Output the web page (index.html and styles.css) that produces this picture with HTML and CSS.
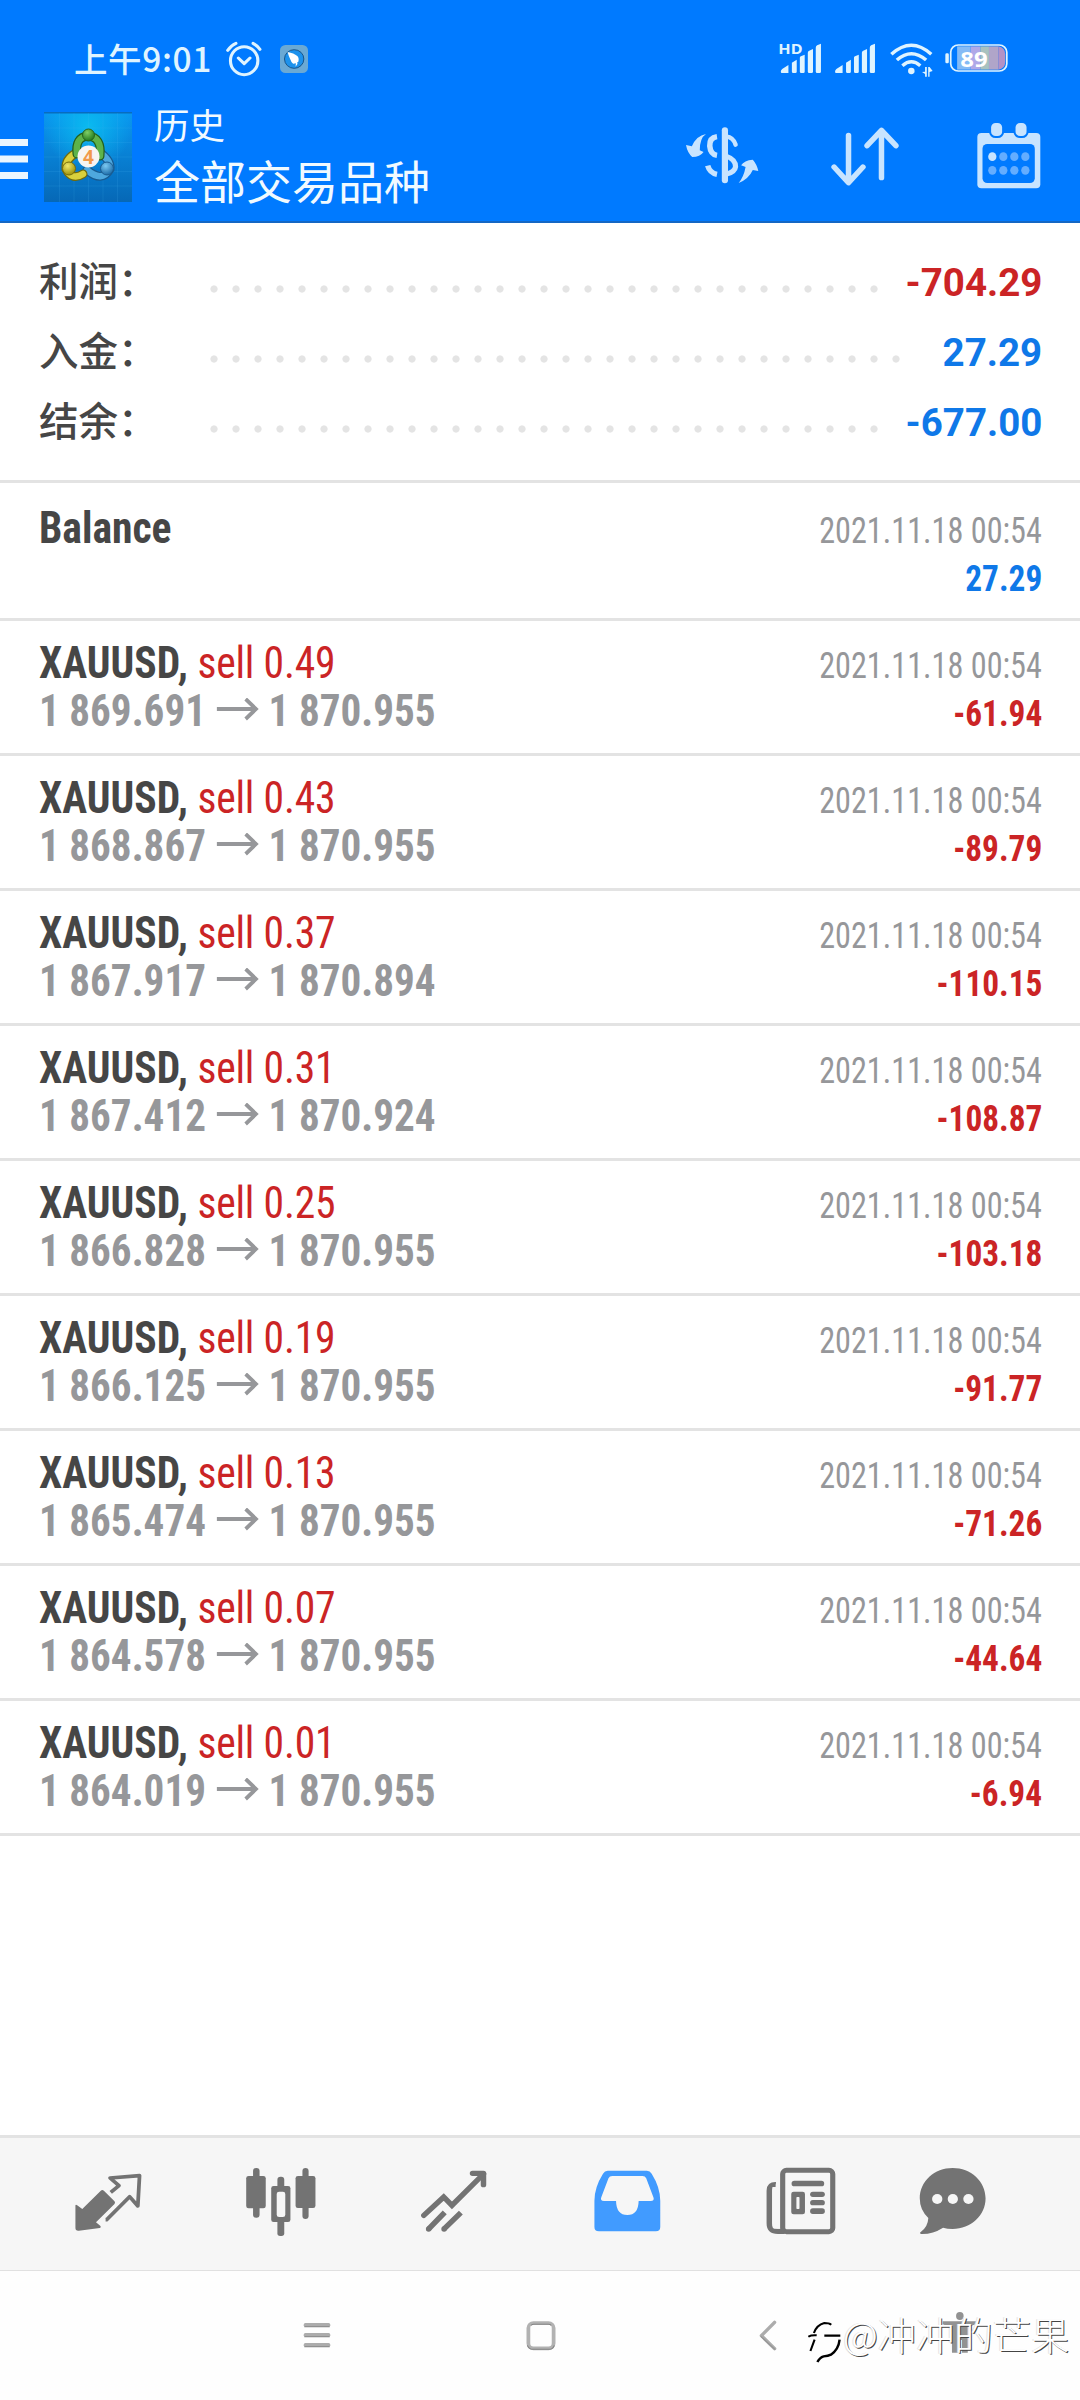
FILE: index.html
```html
<!DOCTYPE html>
<html lang="zh-CN">
<head>
<meta charset="utf-8">
<title>历史</title>
<link rel="stylesheet" href="styles.css">
</head>
<body>
<header class="header">
  <div class="status">
    <span class="time">上午9:01</span>
    <svg class="alarm" width="36" height="40" viewBox="655 120 105 120" preserveAspectRatio="none" fill="none" stroke="#dff4ff" stroke-width="9" stroke-linecap="round" stroke-linejoin="round"><ellipse cx="708" cy="182" rx="40" ry="42"/><path d="M691 174l17 17 17-17M660 151q10-15 24-21M754 148q-9-12-20-18"/></svg>
    <svg class="ding" width="28" height="40" viewBox="813 120 81 120" preserveAspectRatio="none"><rect x="813" y="135" width="81" height="84" rx="16" fill="#6aa9d4"/><circle cx="854" cy="177" r="28" fill="#1d92ec" stroke="#12497c" stroke-width="2.5"/><path d="M835 156q18 3 28 12 6 6 3 17l-4 3 2 3-6 9 1-10-8 1q-6-4-7-10 -6-12-9-25z" fill="#fff"/></svg>
    <div class="signals">
      <svg width="45" height="40" viewBox="689 120 130 120" preserveAspectRatio="none" fill="#dff4ff"><path id="bars" d="M700 215q0-5 4-8l18-12v24h-19q-3 0-3-4zM732 188l14-9v36q0 4-4 4h-6q-4 0-4-4zM755 173q0-3 3-4l11-5v51q0 4-4 4h-6q-4 0-4-4zM778 158q0-4 4-6l11-5v68q0 4-4 4h-7q-4 0-4-4zM801 143q0-5 4-7l11-5v84q0 4-4 4h-7q-4 0-4-4z"/><text x="693" y="162" class="hd" textLength="70" lengthAdjust="spacingAndGlyphs">HD</text></svg>
      <svg width="42" height="40" viewBox="697 120 122 120" preserveAspectRatio="none" fill="#dff4ff"><use href="#bars"/></svg>
      <svg class="wifi" width="43" height="40" viewBox="1018 120 125 120" preserveAspectRatio="none" fill="none" stroke="#dff4ff" stroke-width="10"><path d="M1022 163q58-54 116 0M1038 180q42-38 85 0M1054 197q26-23 52 0"/><circle cx="1080" cy="213" r="9.5" fill="#dff4ff" stroke="none"/><path stroke="none" fill="#dff4ff" d="M1120 201h5v29h-5v-8l-9-6 9-1zM1129 201h4l9 12-9 3v14h-4z"/></svg>
      <svg class="battery" width="63" height="40" viewBox="1177 120 182 120" preserveAspectRatio="none"><rect x="1178" y="160" width="10" height="30" rx="4" fill="#dff4ff"/><rect x="1193.500" y="135" width="162" height="78" rx="22" fill="none" stroke="#dff4ff" stroke-width="5"/><path fill="#85bbf5" d="M1212 139h39v70h-39z"/><path fill="#b0a8e8" d="M1251 139h28v70h-28z"/><path fill="#a9c2bf" d="M1279 139h25v70h-25z"/><path fill="#b0a5c9" d="M1304 139h27v70h-27z"/><path fill="#b392c6" d="M1331 139q20 4 20 24v22q0 20-20 24z"/><text x="1221" y="200" class="level" textLength="79" lengthAdjust="spacingAndGlyphs">89</text></svg>
    </div>
  </div>
  <div class="toolbar">
    <svg width="28" height="96" viewBox="0 110 28 96" fill="#ebf6ff"><path d="M0 139h28v7H0zM0 155.500h28v7H0zM0 172h28v7H0z"/></svg>
    <svg class="logo" width="88" height="96" viewBox="44 110 88 96">
      <defs>
        <linearGradient id="bg" x1="0" y1="0" x2="0" y2="1"><stop offset="0" stop-color="#0a97f0"/><stop offset="1" stop-color="#0668b6"/></linearGradient>
        <radialGradient id="glow" cx=".5" cy=".15" r=".5"><stop offset="0" stop-color="#0abaf0"/><stop offset="1" stop-color="#0abaf0" stop-opacity="0"/></radialGradient>
        <radialGradient id="g1" cx=".4" cy=".3" r=".7"><stop offset="0" stop-color="#7fce66"/><stop offset="1" stop-color="#237a1d"/></radialGradient>
        <radialGradient id="g2" cx=".4" cy=".3" r=".7"><stop offset="0" stop-color="#f0e96c"/><stop offset="1" stop-color="#9d9108"/></radialGradient>
        <radialGradient id="g3" cx=".4" cy=".3" r=".7"><stop offset="0" stop-color="#7cc9f2"/><stop offset="1" stop-color="#1c6ca9"/></radialGradient>
      </defs>
      <path fill="url(#bg)" d="M44 113h88v89H44z"/><path fill="url(#glow)" d="M44 113h88v89H44z"/><path fill="#096dbd" d="M44 112h88v1.500H44z"/>
      <path d="M59.500 113v89M74 113v89M88.500 113v89M103 113v89M117.500 113v89M44 128h88M44 142.500h88M44 157h88M44 171.500h88M44 186h88" stroke="#4db8f5" stroke-opacity=".14" fill="none"/>
      <g fill="none" stroke-linecap="round">
        <path d="M99 152q12 8 11 17-8 14-23 1" stroke="#185b91" stroke-width="9"/><path d="M99 152q12 8 11 17-8 14-23 1" stroke="#4ea8de" stroke-width="6.500"/>
        <path d="M76 153q-11 6-10 16 6 12 17 5" stroke="#716b0b" stroke-width="9"/><path d="M76 153q-11 6-10 16 6 12 17 5" stroke="#d9d03c" stroke-width="6.500"/>
        <path d="M77 154q-2-17 11-18 14 1 12 20" stroke="#235f1c" stroke-width="9"/><path d="M77 154q-2-17 11-18 14 1 12 20" stroke="#5db34a" stroke-width="6.500"/>
      </g>
      <circle cx="88.500" cy="135" r="6" fill="url(#g1)" stroke="#27651e"/><circle cx="69" cy="168.500" r="6.500" fill="url(#g2)" stroke="#756b0b"/><circle cx="107" cy="168.500" r="6.500" fill="url(#g3)" stroke="#1a5b90"/>
      <circle cx="88.500" cy="156.500" r="11" fill="#f7f5f2"/><text x="88.500" y="163.500" class="four" text-anchor="middle">4</text>
    </svg>
    <div class="titles"><div class="title">历史</div><div class="subtitle">全部交易品种</div></div>
    <div class="actions">
      <svg width="73" height="96" viewBox="424 330 212 288" preserveAspectRatio="none" fill="#c8e4ff"><path d="M482 402q-18 12-18 49l11 5q-10 15-33 15-14-13-18-36l17 4q13-32 41-37zM577 549q15-19 20-48l-13-5q9-15 34-17 12 14 16 34l-16-3q-12 27-41 39z"/><g fill="none" stroke="#c8e4ff"><path d="M514 410q-22 3-21 28 2 25 21 28" stroke-width="16"/><path d="M487 497q6 22 27 26" stroke-width="16" /><path d="M540 409q22 3 28 25" stroke-width="13" stroke-linecap="round"/><path d="M540 468q28 10 28 32-2 17-28 23" stroke-width="15"/><path d="M537 391v150" stroke-width="18" stroke-linecap="round"/></g></svg>
      <svg class="sort" width="68" height="96" viewBox="845 330 198 288" preserveAspectRatio="none" fill="none" stroke="#c8e4ff" stroke-width="16" stroke-linecap="round" stroke-linejoin="round"><path d="M896 406v140M854 501l42 47 42-47M992 533V393M950 437l42-46 42 46"/></svg>
      <svg width="64" height="96" viewBox="1268 330 186 288" preserveAspectRatio="none"><rect x="1269" y="399" width="183" height="166" rx="12" fill="#c8e4ff"/><rect x="1284" y="432" width="152" height="117" rx="14" fill="#007aff"/><g fill="#c8e4ff" stroke="#007aff" stroke-width="6"><rect x="1306" y="366" width="38" height="45" rx="16"/><rect x="1377" y="366" width="38" height="45" rx="16"/></g><g fill="#64adff"><ellipse cx="1312.500" cy="470" rx="12" ry="13" fill="#c8e4ff"/><ellipse cx="1344.500" cy="470" rx="12" ry="13"/><ellipse cx="1376.500" cy="470" rx="12" ry="13"/><ellipse cx="1408.500" cy="470" rx="12" ry="13"/><ellipse cx="1312.500" cy="511" rx="12" ry="13"/><ellipse cx="1344.500" cy="511" rx="12" ry="13"/><ellipse cx="1376.500" cy="511" rx="12" ry="13"/><ellipse cx="1408.500" cy="511" rx="12" ry="13"/></g></svg>
    </div>
  </div>
</header>

<section class="summary">
  <div class="sum"><span class="label">利润：</span><span class="dots"></span><span class="total red">-704.29</span></div>
  <div class="sum"><span class="label">入金：</span><span class="dots long"></span><span class="total blue">27.29</span></div>
  <div class="sum"><span class="label">结余：</span><span class="dots"></span><span class="total blue">-677.00</span></div>
</section>

<main class="deals" id="deals">
  <article class="deal balance">
    <div class="line"><span class="name">Balance</span><span class="date">2021.11.18 00:54</span></div>
    <div class="line"><span class="prices">&nbsp;</span><span class="amount blue">27.29</span></div>
  </article>
</main>

<nav class="tabs">
  <svg viewBox="209 135 210 216" preserveAspectRatio="none"><path d="M219 256q1-3 5 0l15 11 54-55q4-4 9 0l31 32q3 4 0 8l-54 55 13 11q3 4-2 6l-61 8q-10 1-10-8z" fill="#737373"/><path d="M322 217l24-20-26-23 86-7-5 91-24-28-67 69h-3" fill="none" stroke="#737373" stroke-width="11" stroke-linejoin="round"/></svg>
  <svg viewBox="711.500 135 210 216" preserveAspectRatio="none" fill="#737373"><rect x="735" y="144" width="19" height="149" rx="9"/><rect x="715" y="168" width="57" height="97" rx="7"/><rect x="879" y="144" width="18" height="153" rx="9"/><rect x="859" y="168" width="58" height="96" rx="7"/><rect x="806" y="170" width="20" height="40" rx="9"/><rect x="806" y="290" width="20" height="58" rx="8"/><rect x="788" y="198" width="56" height="108" rx="7"/><rect x="804" y="215" width="25" height="76" rx="7" fill="#f6f6f6"/></svg>
  <svg viewBox="1214 135 210 216" preserveAspectRatio="none" fill="none" stroke="#737373" stroke-width="16"><path d="M1231 286l58-55 24 25 92-94" stroke-linecap="round"/><path d="M1373 160h32v34" stroke-width="16" stroke-linecap="round" stroke-linejoin="round"/><path d="M1292 277l-46 49M1339 278l-48 48"/><path d="M1245 327h.1M1290 327h.1" stroke-linecap="round"/></svg>
  <svg viewBox="148 135 210 216" preserveAspectRatio="none"><path fill="#419bff" fill-rule="evenodd" d="M197 152h114q9 0 14 9 25 41 25 81v79q0 13-13 13H171q-13 0-13-13v-79q0-40 25-81 5-9 14-9zM210 168q-8 0-11 7l-21 57q-4 11 8 11h35q1 42 33 42t33-42h35q12 0 8-11l-21-57q-3-7-11-7z"/></svg>
  <svg viewBox="650.500 135 210 216" preserveAspectRatio="none"><rect x="705" y="151" width="146" height="184" rx="11" fill="none" stroke="#737373" stroke-width="15"/><path d="M685 194q-19-1-19 18v98q0 24 25 24h20" fill="none" stroke="#737373" stroke-width="16"/><path d="M675 201h10v-9h12v134h-17q-5 0-5-10z" fill="#f6f6f6"/><g fill="#737373"><rect x="731" y="182" width="95" height="17" rx="8"/><rect x="730" y="215" width="40" height="68" rx="7"/><rect x="785" y="215" width="43" height="16" rx="8"/><rect x="785" y="240" width="43" height="16" rx="8"/><rect x="785" y="265" width="43" height="17" rx="8"/></g><rect x="745" y="231" width="9" height="36" rx="2" fill="#f6f6f6"/></svg>
  <svg class="chat" viewBox="1095 135 210 216" preserveAspectRatio="none"><path fill="#737373" d="M1199 144c53 0 96 40 96 91s-43 92-96 92q-16 0-28-4-30 20-64 19-6-2-1-6 21-16 22-42-25-24-25-59c0-51 43-91 96-91z"/><g fill="#f6f6f6"><circle cx="1154" cy="237" r="15"/><circle cx="1199.500" cy="237" r="15"/><circle cx="1245" cy="237" r="15"/></g></svg>
</nav>

<footer class="system">
  <svg class="recents" width="28" height="34" viewBox="881 597 82 102" preserveAspectRatio="none"><g fill="#acacac"><rect x="883" y="609" width="78" height="12" rx="5"/><rect x="883" y="639" width="78" height="12" rx="5"/><rect x="883" y="669" width="78" height="12" rx="5"/></g><path d="M886 620.500h72M886 650.500h72M886 680.500h72" stroke="#868686" stroke-width="3" stroke-linecap="round"/></svg>
  <svg class="home" width="30" height="34" viewBox="1527 597 88 102" preserveAspectRatio="none" fill="none"><rect x="1534" y="609" width="74" height="76" rx="15" stroke="#b2b2b2" stroke-width="11"/><path d="M1531 676q5 12 16 12h48q11 0 15-12M1542 616q3-3 8-3h43q5 0 8 3" stroke="#858585" stroke-width="3"/></svg>
  <svg class="back" width="18" height="34" viewBox="635 597 52 102" preserveAspectRatio="none" fill="none" stroke-linecap="round" stroke-linejoin="round"><path d="M680 607l-38 40 38 39" stroke="#acacac" stroke-width="10"/><path d="M641 650l40 38" stroke="#939393" stroke-width="3"/></svg>
  <div class="mark">
    <svg class="person" width="34" height="44" viewBox="1168 572 99 132" preserveAspectRatio="none" fill="#929292"><ellipse cx="1220" cy="587" rx="11" ry="12"/><path d="M1170 603h97v9l-24 8v77h-17v-38h-10v38h-19v-75l-27-10z"/></svg>
    <svg class="swirl" width="33" height="48" viewBox="780 600 95 144" preserveAspectRatio="none" fill="none" stroke="#000"><path d="M797 642q8-24 30-30 14 0 20 5M781 653q8-5 24-4M799 662l-12 34" stroke-width="6"/><path d="M827 650h46M871 662q-3 30-25 45-8 4-21 5-11 3-18 17" stroke-width="7"/></svg>
    <span class="handle">@冲冲的芒果</span>
  </div>
</footer>
<script src="app.js"></script>
</body>
</html>
```
FILE: styles.css
```css
* { box-sizing: border-box; }
body { margin: 0; width: 1080px; height: 2400px; display: flex; flex-direction: column; background: #fff; font-family: Roboto, "Noto Sans CJK SC", sans-serif; overflow: hidden; }
svg { display: block; flex: none; }

.header { height: 223px; background: #007aff; border-bottom: 2px solid #1467c4; }
.status { display: flex; height: 110px; padding: 40px 72px 0 74px; color: #dff4ff; }
.time { width: 152px; margin-top: -2px; font: 500 33.500px/40px "Noto Sans CJK SC", sans-serif; letter-spacing: .6px; white-space: nowrap; }
.ding { margin-left: 18px; }
.signals { display: flex; margin-left: auto; }
.signals svg { margin-left: 12px; }
.signals .wifi { margin-left: 14px; }
.signals .battery { margin-left: 12px; }
.hd { font: 700 45px "Noto Sans", sans-serif; }
.level { font: 700 63px "Noto Sans", sans-serif; fill: #fff; }
.four { font: 700 19px "Open Sans", sans-serif; fill: #f19a4b; }

.toolbar { display: flex; }
.logo { margin-left: 16px; }
.titles { margin: -6px 0 0 22px; color: #f1faff; font-family: "Noto Sans CJK SC", sans-serif; white-space: nowrap; }
.title { font-size: 35.500px; line-height: 40px; }
.subtitle { font-size: 46px; line-height: 68px; margin-top: 1px; }
.actions { display: flex; margin-left: auto; padding-right: 39px; }
.sort { margin: 0 78px 0 72px; }

.summary { height: 260px; padding: 24px 38px 0 39px; border-bottom: 3px solid #e3e3e3; }
.sum { display: flex; align-items: center; height: 70px; }
.label { width: 163.500px; margin-top: -6px; font: 500 39.500px/60px "Noto Sans CJK SC", sans-serif; color: #464646; white-space: nowrap; }
.dots { width: 682px; height: 8px; margin-top: 13px; background: radial-gradient(circle, #e4e4e4 3.200px, transparent 4px) 0 0 / 22.010px 8px; }
.dots.long { width: 704px; }
.total { margin-left: auto; font-family: Roboto, sans-serif; font-size: 39.500px; font-weight: 700; transform: scaleX(.975); transform-origin: right; }
.red { color: #cb2425; }
.blue { color: #0f78e8; }

.deals { flex: 1; font-family: "Roboto Condensed", Roboto, sans-serif; }
.deal { height: 135px; padding: 18px 38px 0 39px; border-bottom: 3px solid #e3e3e3; }
.deal.balance { height: 138px; padding-top: 21px; }
.line { display: flex; justify-content: space-between; align-items: baseline; height: 48px; line-height: 48px; white-space: nowrap; }
.name, .prices { font-size: 44px; font-weight: 700; transform: scaleX(.945); transform-origin: left; color: #464646; }
.side { font-weight: 450; letter-spacing: -.2px; }
.prices { color: #96979a; transform: scaleX(.935); }
.arrow { display: inline-block; margin: 0 10px 0 11px; }
.date, .amount { font-size: 36px; transform-origin: right; }
.date { color: #96979a; transform: scaleX(.895); }
.amount { font-weight: 700; transform: scaleX(.925); }

.tabs { display: flex; gap: 101px; height: 136px; padding: 27px 0 0 72px; background: #f6f6f6; border-top: 3px solid #e3e3e3; border-bottom: 1px solid #e1e1e1; }
.tabs svg { width: 72px; height: 72px; }
.tabs .chat { margin-left: -20px; }

.system { position: relative; display: flex; height: 129px; padding-top: 48px; background: #fefefe; }
.recents { margin-left: 303px; }
.home { margin-left: 195px; }
.back { margin-left: 203px; }
.mark { position: absolute; left: 808px; top: 40px; width: 272px; height: 60px; }
.person { position: absolute; left: 134px; top: 0; }
.swirl { position: absolute; left: 0; top: 8px; }
.handle { position: absolute; left: 35px; top: -2px; font: 300 38.300px/50px "Noto Sans CJK SC", sans-serif; color: #fff; text-shadow: 1px 1px 0 #444, -1px 0 0 #e4e4e4; white-space: nowrap; }
```
FILE: app.js
```js
const deals = [
  ['0.49', '1 869.691', '1 870.955', '-61.94'],
  ['0.43', '1 868.867', '1 870.955', '-89.79'],
  ['0.37', '1 867.917', '1 870.894', '-110.15'],
  ['0.31', '1 867.412', '1 870.924', '-108.87'],
  ['0.25', '1 866.828', '1 870.955', '-103.18'],
  ['0.19', '1 866.125', '1 870.955', '-91.77'],
  ['0.13', '1 865.474', '1 870.955', '-71.26'],
  ['0.07', '1 864.578', '1 870.955', '-44.64'],
  ['0.01', '1 864.019', '1 870.955', '-6.94'],
];

const arrow = '<svg class="arrow" width="46" height="28" viewBox="0 0 46 28" fill="none" stroke="#96979a" stroke-width="4"><path d="M0 11h43M31 1l11 10-11 10"/></svg>';

document.getElementById('deals').insertAdjacentHTML('beforeend', deals.map(([lots, open, close, profit]) => `
  <article class="deal">
    <div class="line"><span class="name">XAUUSD, <span class="side red">sell ${lots}</span></span><span class="date">2021.11.18 00:54</span></div>
    <div class="line"><span class="prices">${open}${arrow}${close}</span><span class="amount red">${profit}</span></div>
  </article>`).join(''));
```
